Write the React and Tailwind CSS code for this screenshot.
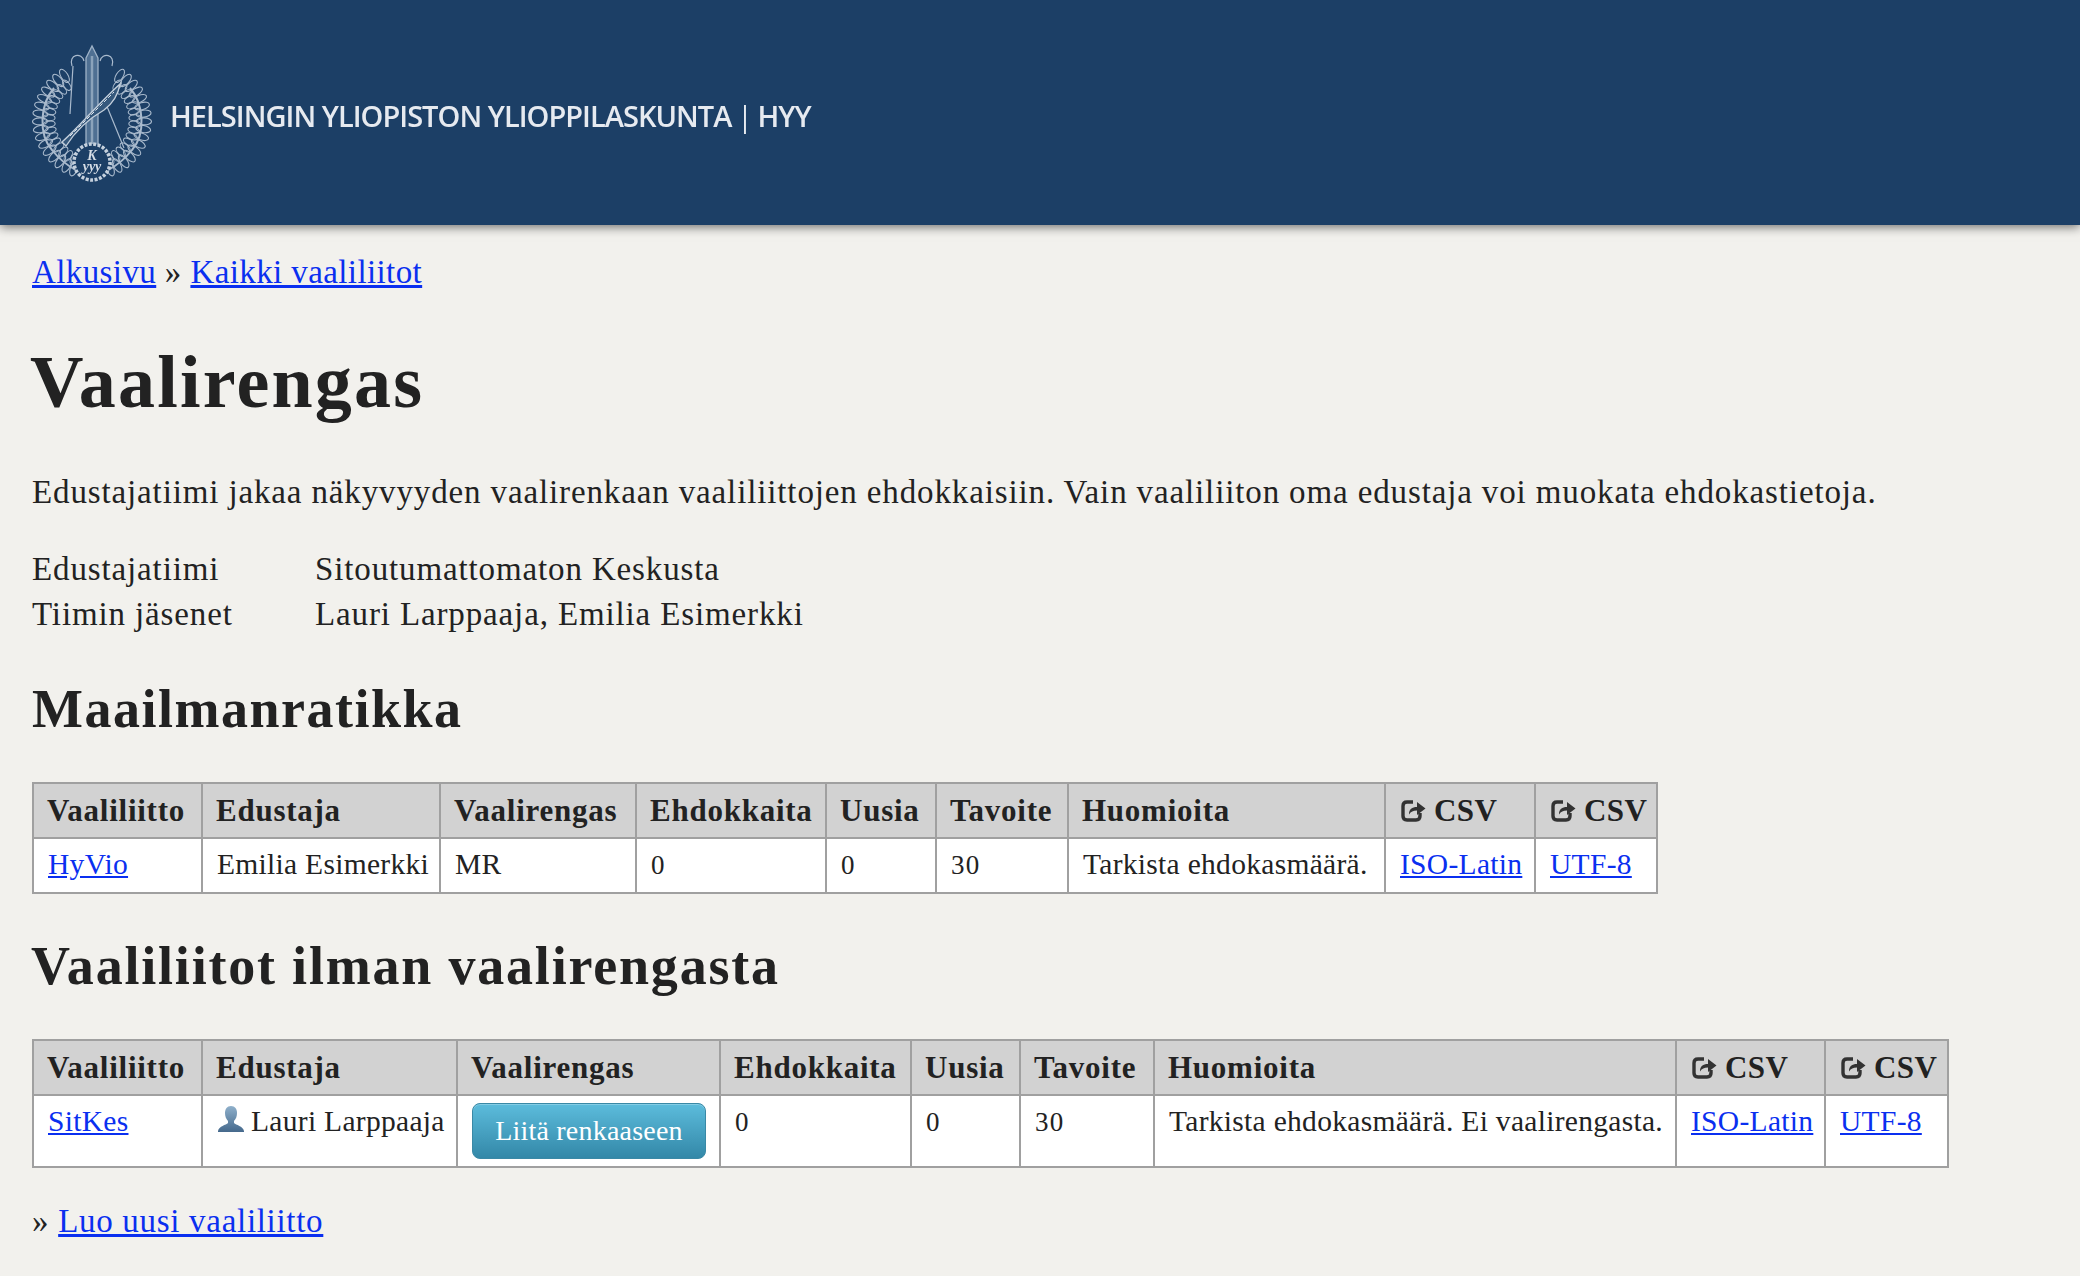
const tips = [0, 1, 2, 3, 4, 5, 6, 7, 8, 9, 10, 11, 12, 13, 14, 15];

// Crest in the header: two laurel branches, a sword, a quill and a seal
function Crest() {
    return (
        <svg viewBox="0 0 120 138" className="w-[120px] h-[138px] shrink-0 blur-[0.7px]" fill="none" stroke="#a9bacd">
            <path d="M22 44 C8 60 6 90 20 106 C28 116 36 122 44 126" strokeWidth="2" />
            <path d="M98 44 C112 60 114 90 100 106 C92 116 84 122 76 126" strokeWidth="2" />
            {tips.map((i) => (
                <g key={i} strokeWidth="1.1">
                    <ellipse cx="60" cy="24" rx="3.5" ry="7.5" transform={`rotate(${32 + i * 8.5} 60 76)`} />
                    <ellipse cx="60" cy="24" rx="3.5" ry="7.5" transform={`rotate(${-32 - i * 8.5} 60 76)`} />
                    <ellipse cx="60" cy="33" rx="3" ry="6" transform={`rotate(${36 + i * 8.5} 60 76)`} />
                    <ellipse cx="60" cy="33" rx="3" ry="6" transform={`rotate(${-36 - i * 8.5} 60 76)`} />
                </g>
            ))}
            <path d="M54 14 L60 2 L66 14 V104 H54 Z" fill="#4f7093" stroke="#9fb3c8" strokeWidth="1.3" />
            <path d="M60 12 V100" stroke="#8ba3bb" strokeWidth="2.5" />
            <path d="M40 22 C36 10 50 8 52 17 M80 22 C84 10 70 8 68 17 M41 22 L38 70 M74 60 L92 104" strokeWidth="1.2" />
            <path d="M30 98 C46 84 66 60 88 40 C86 52 80 60 72 66 C58 74 44 86 34 102 Z" fill="#35587c" stroke="#c3cfdc" strokeWidth="1.4" />
            <path d="M38 92 L82 48" stroke="#dfe6ee" strokeWidth="1" strokeDasharray="4 2" />
            <circle cx="60" cy="118" r="18" fill="#1c3f66" stroke="#c4d0dd" strokeWidth="3.5" strokeDasharray="3 1.5" />
            <text x="60" y="116" textAnchor="middle" fontSize="14" fontWeight="700" fontStyle="italic" fill="#d5dde6" stroke="none" fontFamily="'Liberation Serif', serif">K</text>
            <text x="60" y="127" textAnchor="middle" fontSize="14" fontWeight="700" fontStyle="italic" fill="#d5dde6" stroke="none" fontFamily="'Liberation Serif', serif">yyy</text>
        </svg>
    );
}

function PersonIcon() {
    return (
        <svg viewBox="0 0 28 28" className="inline-block w-[28px] h-[28px] mr-[6px] align-[-2px]">
            <defs>
                <linearGradient id="person" x1="0" y1="0" x2="0" y2="1">
                    <stop offset="0" stopColor="#8fb0cb" />
                    <stop offset="1" stopColor="#45698c" />
                </linearGradient>
            </defs>
            <path d="M14 1c4 0 6 3 6 7 0 3-1 6-3 8v2c2 2 9 3 10 8v1H1v-1c1-5 8-6 10-8v-2c-2-2-3-5-3-8 0-4 2-7 6-7z" fill="url(#person)" />
        </svg>
    );
}

// Open box with a solid arrow leaving through its top right corner
function ShareIcon() {
    return (
        <svg viewBox="0 0 25 23" className="w-[25px] h-[23px] shrink-0 blur-[0.3px]">
            <path d="M12 3 H6 Q2 3 2 7 V17 Q2 21 6 21 H15 Q19 21 19 17 V14" fill="none" stroke="#333" strokeWidth="3.4" />
            <path d="M8 15.5 C8 10 11 8 16 8 V3 L24.5 9.5 L16 16 V11.5 C12 11.5 10 12.5 8 15.5 Z" fill="#333" />
        </svg>
    );
}

function Num({ children }) {
    return <span className="text-[27px] tracking-[1.2px]">{children}</span>;
}

function Link({ children }) {
    return <a href="#" className="text-[#0a2ff0] underline">{children}</a>;
}

function CsvHead() {
    return (
        <span className="inline-flex items-center gap-[8px] ml-[2px] tracking-[0.4px]">
            <ShareIcon />
            CSV
        </span>
    );
}

const th = 'border-2 border-[#a0a0a0] bg-[#d2d2d2] px-[13px] h-[55px] text-left font-bold text-[31px] tracking-[0.75px] whitespace-nowrap overflow-hidden';
const td = 'border-2 border-[#a0a0a0] bg-white px-[14px] pt-[3px] align-top text-[29.5px] tracking-[0.3px] whitespace-nowrap overflow-hidden';

function ElectionTable({ widths, rows, tableWidth }) {
    return (
        <table className={`table-fixed border-collapse ${tableWidth}`}>
            <colgroup>
                {widths.map((w, i) => <col key={i} className={w} />)}
            </colgroup>
            <thead>
                <tr>
                    <th className={th}>Vaaliliitto</th>
                    <th className={th}>Edustaja</th>
                    <th className={th}>Vaalirengas</th>
                    <th className={th}>Ehdokkaita</th>
                    <th className={th}>Uusia</th>
                    <th className={th}>Tavoite</th>
                    <th className={th}>Huomioita</th>
                    <th className={th}><CsvHead /></th>
                    <th className={th}><CsvHead /></th>
                </tr>
            </thead>
            <tbody>{rows}</tbody>
        </table>
    );
}

export default function App() {
    return (
        <div className="min-h-screen bg-[#f2f1ed] text-[#222] font-['Liberation_Serif',serif] text-[33px] leading-[45px]">
            <header className="h-[225px] bg-[#1c3f66] shadow-[0_2px_10px_rgba(0,0,0,0.55)] flex items-center pl-[32px]">
                <Crest />
                <div className="ml-[18px] mt-[6px] font-['Open_Sans',sans-serif] font-semibold text-[29px] tracking-[-0.97px] text-[#e6eaf0] blur-[0.6px] whitespace-nowrap">
                    HELSINGIN YLIOPISTON YLIOPPILASKUNTA<span className="font-normal -mx-[1px]"> | </span>HYY
                </div>
            </header>

            <main className="px-[32px]">
                <p className="pt-[25px] tracking-[0.4px]"><Link>Alkusivu</Link> » <Link>Kaikki vaaliliitot</Link></p>
                <h1 className="mt-[51px] text-[74px] leading-[72px] font-bold tracking-[2.2px] -ml-[2px]">Vaalirengas</h1>
                <p className="mt-[52px] tracking-[0.87px]">Edustajatiimi jakaa näkyvyyden vaalirenkaan vaaliliittojen ehdokkaisiin. Vain vaaliliiton oma edustaja voi muokata ehdokastietoja.</p>
                <dl className="mt-[32px] grid grid-cols-[283px_1fr] tracking-[0.87px]">
                    <dt>Edustajatiimi</dt>
                    <dd>Sitoutumattomaton Keskusta</dd>
                    <dt>Tiimin jäsenet</dt>
                    <dd>Lauri Larppaaja, Emilia Esimerkki</dd>
                </dl>
                <h2 className="mt-[44px] text-[54px] leading-[56px] font-bold tracking-[1.5px]">Maailmanratikka</h2>
                <div className="mt-[45px]">
                    <ElectionTable
                        tableWidth="w-[1624px]"
                        widths={['w-[169px]', 'w-[238px]', 'w-[196px]', 'w-[190px]', 'w-[110px]', 'w-[132px]', 'w-[317px]', 'w-[150px]', 'w-[122px]']}
                        rows={(
                            <tr className="h-[55px]">
                                <td className={td}><Link>HyVio</Link></td>
                                <td className={td}>Emilia Esimerkki</td>
                                <td className={td}>MR</td>
                                <td className={td}><Num>0</Num></td>
                                <td className={td}><Num>0</Num></td>
                                <td className={td}><Num>30</Num></td>
                                <td className={td}>Tarkista ehdokasmäärä.</td>
                                <td className={td}><Link>ISO-Latin</Link></td>
                                <td className={td}><Link>UTF-8</Link></td>
                            </tr>
                        )}
                    />
                </div>
                <h2 className="mt-[44px] -ml-[1px] text-[54px] leading-[56px] font-bold tracking-[1.8px]">Vaaliliitot ilman vaalirengasta</h2>
                <div className="mt-[45px]">
                    <ElectionTable
                        tableWidth="w-[1915px]"
                        widths={['w-[169px]', 'w-[255px]', 'w-[263px]', 'w-[191px]', 'w-[109px]', 'w-[134px]', 'w-[522px]', 'w-[149px]', 'w-[123px]']}
                        rows={(
                            <tr className="h-[72px]">
                                <td className={td}><Link>SitKes</Link></td>
                                <td className={td}><PersonIcon />Lauri Larppaaja</td>
                                <td className={`${td} !pt-[7px] !px-[13px]`}>
                                    <button className="w-[234px] h-[56px] ml-[1px] rounded-[8px] border border-[#3a89a6] bg-gradient-to-b from-[#5cbcdc] to-[#3388a8] text-white text-[28px] tracking-[0.2px] leading-none shadow-[inset_0_1px_0_rgba(255,255,255,0.25)]">Liitä renkaaseen</button>
                                </td>
                                <td className={td}><Num>0</Num></td>
                                <td className={td}><Num>0</Num></td>
                                <td className={td}><Num>30</Num></td>
                                <td className={td}>Tarkista ehdokasmäärä. Ei vaalirengasta.</td>
                                <td className={td}><Link>ISO-Latin</Link></td>
                                <td className={td}><Link>UTF-8</Link></td>
                            </tr>
                        )}
                    />
                </div>
                <p className="mt-[31px] tracking-[0.7px]">» <Link>Luo uusi vaaliliitto</Link></p>
            </main>
        </div>
    );
}
